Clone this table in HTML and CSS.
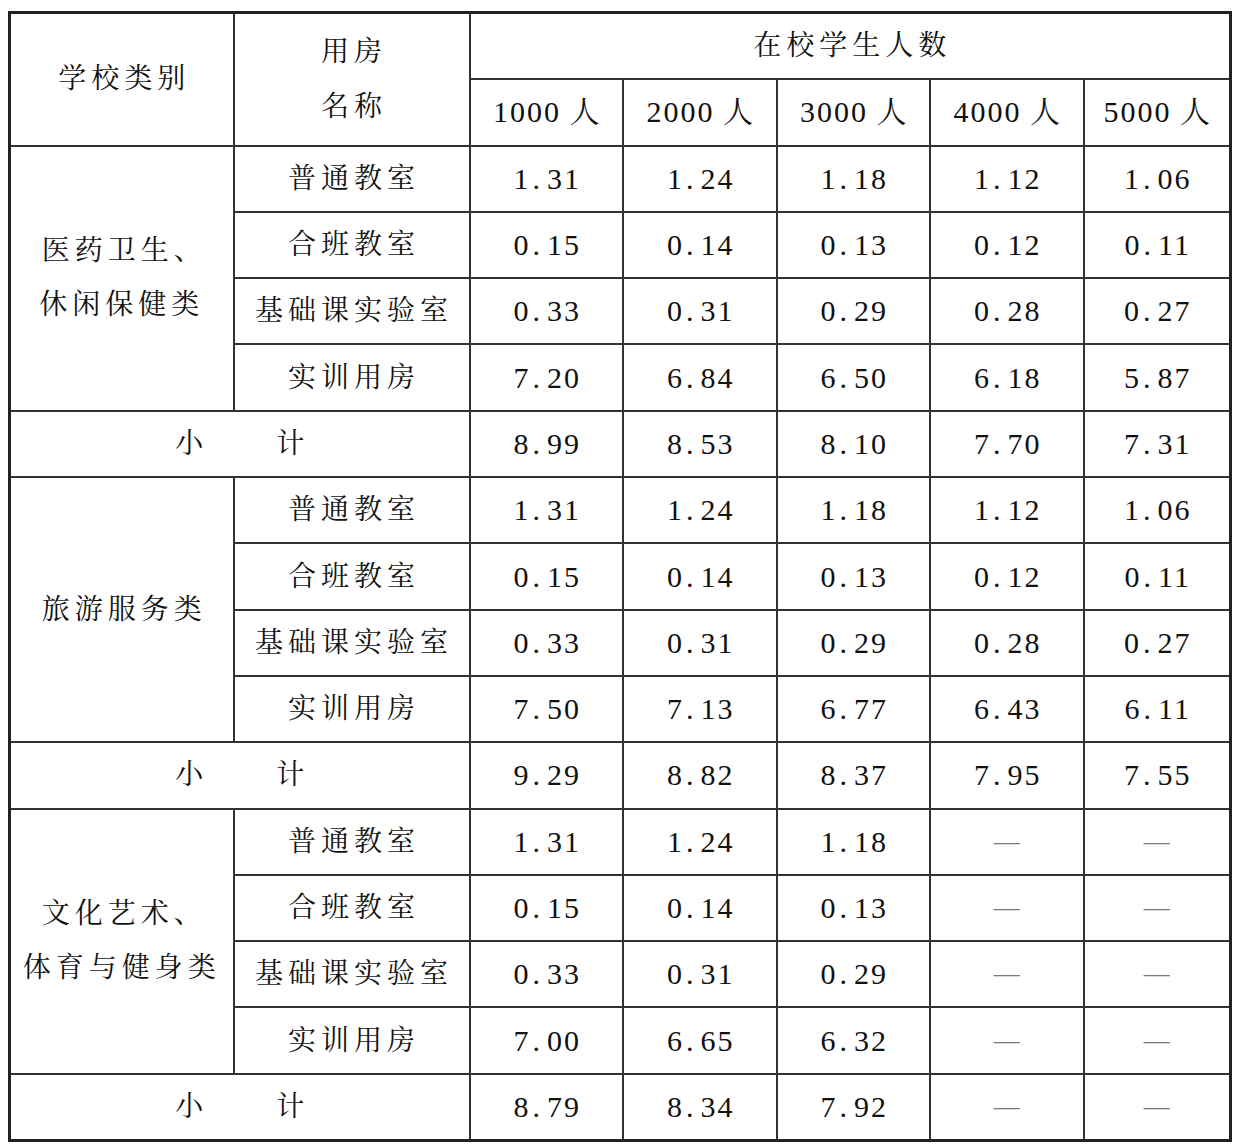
FILE: index.html
```html
<!DOCTYPE html>
<html>
<head>
<meta charset="utf-8">
<link rel="stylesheet" href="styles.css">
</head>
<body>
<table class="grid">
<colgroup>
<col class="c-cat"><col class="c-room"><col class="c-n"><col class="c-n"><col class="c-n"><col class="c-n"><col class="c-last">
</colgroup>
<tr><td rowspan="2" class="txt">学校类别</td><td rowspan="2" class="txt"><div>用房</div><div class="l2">名称</div></td><td colspan="5" class="txt">在校学生人数</td></tr>
<tr><td class="num">1000 人</td><td class="num">2000 人</td><td class="num">3000 人</td><td class="num">4000 人</td><td class="num">5000 人</td></tr>

<tr><td rowspan="4" class="txt cat">医药卫生、<br>休闲保健类</td><td class="txt">普通教室</td><td class="num">1<i>.</i>31</td><td class="num">1<i>.</i>24</td><td class="num">1<i>.</i>18</td><td class="num">1<i>.</i>12</td><td class="num">1<i>.</i>06</td></tr>
<tr><td class="txt">合班教室</td><td class="num">0<i>.</i>15</td><td class="num">0<i>.</i>14</td><td class="num">0<i>.</i>13</td><td class="num">0<i>.</i>12</td><td class="num">0<i>.</i>11</td></tr>
<tr><td class="txt">基础课实验室</td><td class="num">0<i>.</i>33</td><td class="num">0<i>.</i>31</td><td class="num">0<i>.</i>29</td><td class="num">0<i>.</i>28</td><td class="num">0<i>.</i>27</td></tr>
<tr><td class="txt">实训用房</td><td class="num">7<i>.</i>20</td><td class="num">6<i>.</i>84</td><td class="num">6<i>.</i>50</td><td class="num">6<i>.</i>18</td><td class="num">5<i>.</i>87</td></tr>
<tr><td colspan="2" class="txt sub"><span class="xiao">小</span>计</td><td class="num">8<i>.</i>99</td><td class="num">8<i>.</i>53</td><td class="num">8<i>.</i>10</td><td class="num">7<i>.</i>70</td><td class="num">7<i>.</i>31</td></tr>

<tr><td rowspan="4" class="txt cat">旅游服务类</td><td class="txt">普通教室</td><td class="num">1<i>.</i>31</td><td class="num">1<i>.</i>24</td><td class="num">1<i>.</i>18</td><td class="num">1<i>.</i>12</td><td class="num">1<i>.</i>06</td></tr>
<tr><td class="txt">合班教室</td><td class="num">0<i>.</i>15</td><td class="num">0<i>.</i>14</td><td class="num">0<i>.</i>13</td><td class="num">0<i>.</i>12</td><td class="num">0<i>.</i>11</td></tr>
<tr><td class="txt">基础课实验室</td><td class="num">0<i>.</i>33</td><td class="num">0<i>.</i>31</td><td class="num">0<i>.</i>29</td><td class="num">0<i>.</i>28</td><td class="num">0<i>.</i>27</td></tr>
<tr><td class="txt">实训用房</td><td class="num">7<i>.</i>50</td><td class="num">7<i>.</i>13</td><td class="num">6<i>.</i>77</td><td class="num">6<i>.</i>43</td><td class="num">6<i>.</i>11</td></tr>
<tr><td colspan="2" class="txt sub"><span class="xiao">小</span>计</td><td class="num">9<i>.</i>29</td><td class="num">8<i>.</i>82</td><td class="num">8<i>.</i>37</td><td class="num">7<i>.</i>95</td><td class="num">7<i>.</i>55</td></tr>

<tr><td rowspan="4" class="txt cat">文化艺术、<br>体育与健身类</td><td class="txt">普通教室</td><td class="num">1<i>.</i>31</td><td class="num">1<i>.</i>24</td><td class="num">1<i>.</i>18</td><td class="dash">—</td><td class="dash">—</td></tr>
<tr><td class="txt">合班教室</td><td class="num">0<i>.</i>15</td><td class="num">0<i>.</i>14</td><td class="num">0<i>.</i>13</td><td class="dash">—</td><td class="dash">—</td></tr>
<tr><td class="txt">基础课实验室</td><td class="num">0<i>.</i>33</td><td class="num">0<i>.</i>31</td><td class="num">0<i>.</i>29</td><td class="dash">—</td><td class="dash">—</td></tr>
<tr><td class="txt">实训用房</td><td class="num">7<i>.</i>00</td><td class="num">6<i>.</i>65</td><td class="num">6<i>.</i>32</td><td class="dash">—</td><td class="dash">—</td></tr>
<tr><td colspan="2" class="txt sub"><span class="xiao">小</span>计</td><td class="num">8<i>.</i>79</td><td class="num">8<i>.</i>34</td><td class="num">7<i>.</i>92</td><td class="dash">—</td><td class="dash">—</td></tr>
</table>
</body>
</html>
```

FILE: styles.css
```css
html, body {
  margin: 0;
  padding: 0;
  background: #ffffff;
}
body {
  padding: 11px 8px 0 8px;
  font-family: "Liberation Serif", "Noto Serif CJK SC", serif;
  color: #111111;
}
.grid {
  border-collapse: collapse;
  table-layout: fixed;
  width: 1222px;
  border: 3px solid #222222;
}
.c-cat { width: 224px; }
.c-room { width: 236px; }
.c-n { width: 153.5px; }
.c-last { width: 147px; }
.grid td {
  border: 2px solid #333333;
  height: 64.3px;
  padding: 0;
  text-align: center;
  vertical-align: middle;
  font-family: "Liberation Serif", "Noto Serif CJK SC", serif;
  font-size: 28px;
  line-height: 34px;
}
.grid td.txt {
  letter-spacing: 5px;
  text-indent: 5px;
}
.txt .l2 {
  margin-top: 21px;
}
.grid td.cat {
  line-height: 54px;
}
.grid td.num {
  font-size: 30px;
  letter-spacing: 2px;
  text-indent: 2px;
  word-spacing: -1px;
}
.num i {
  font-style: normal;
  margin-left: 2px;
  margin-right: 5px;
}
.grid td.dash {
  color: #7a7a7a;
  font-size: 26px;
}
.xiao {
  margin-right: 68px;
}
```
